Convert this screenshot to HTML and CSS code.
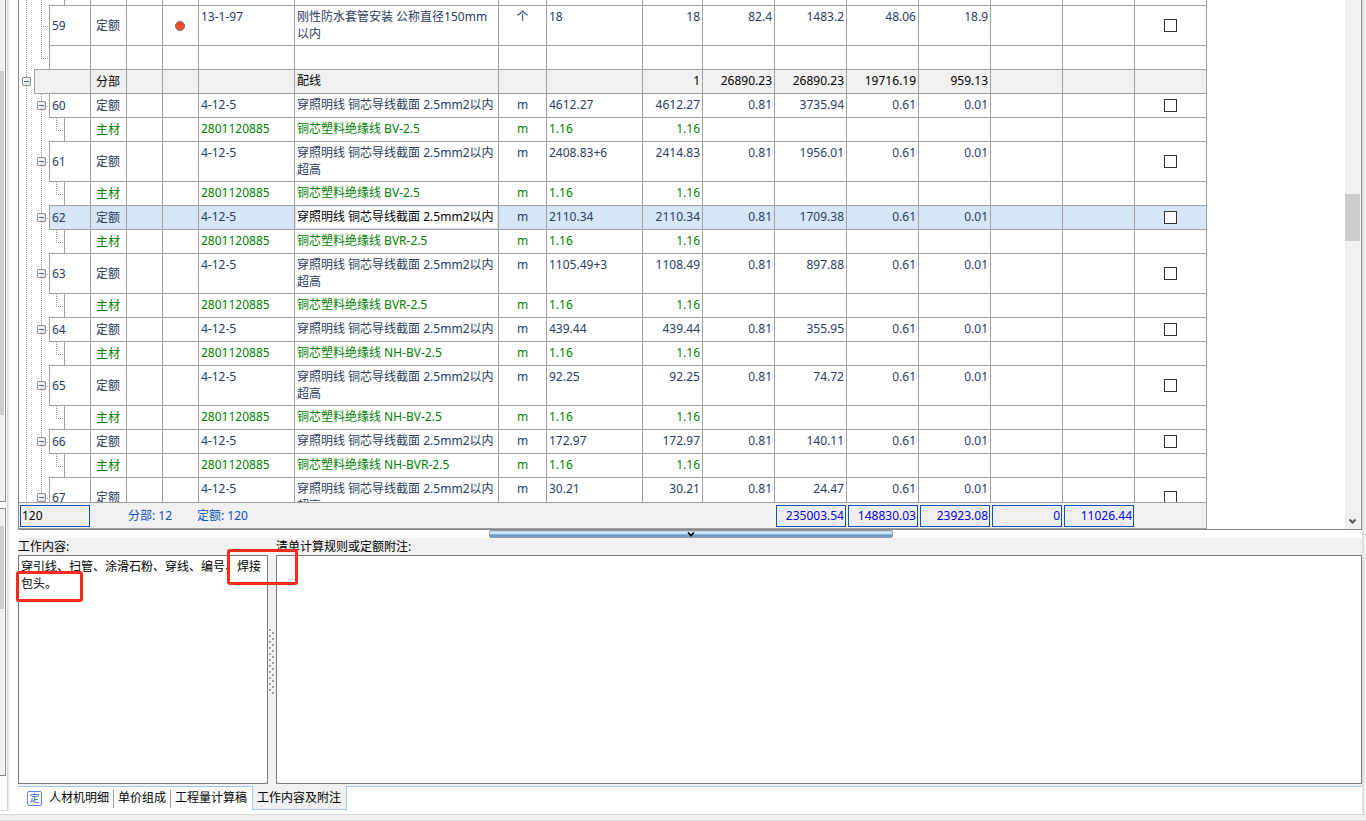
FILE: index.html
```html
<!DOCTYPE html>
<html lang="zh-CN">
<head>
<meta charset="utf-8">
<title>工作内容及附注</title>
<link rel="stylesheet" href="styles.css">
</head>
<body>
<div class="app">
  <aside class="side">
    <div class="side-pane side-top"><div class="side-thumb"></div></div>
    <div class="side-pane side-bottom"><div class="side-thumb"></div></div>
  </aside>
  <main class="main">
    <section class="grid-pane">
      <div class="grid-body">
        <div class="grid-rows">
          <table class="grid">
            <colgroup><col class="c-tree"><col class="c-s"><col class="c-s"><col class="c-s"><col class="c-code"><col class="c-name"><col class="c-unit"><col class="c-code"><col class="c-qty"><col class="c-num"><col class="c-num"><col class="c-num"><col class="c-num"><col class="c-num"><col class="c-num"><col class="c-num"></colgroup>
            <tbody>
              <tr class="cut"><td class="tree through"><div class="base"><div class="no leaf"></div></div></td><td></td><td></td><td></td><td></td><td></td><td></td><td></td><td></td><td></td><td></td><td></td><td></td><td></td><td></td><td></td></tr>
              <tr class="tall"><td class="tree item"><div class="base"><div class="no">59</div></div></td><td>定额</td><td></td><td><span class="dot"></span></td><td>13-1-97</td><td>刚性防水套管安装 公称直径150mm<br>以内</td><td>个</td><td>18</td><td>18</td><td>82.4</td><td>1483.2</td><td>48.06</td><td>18.9</td><td></td><td></td><td><input type="checkbox" aria-label="59"></td></tr>
              <tr><td class="tree last"><div class="base wide"><div class="no leaf"></div></div></td><td></td><td></td><td></td><td></td><td></td><td></td><td></td><td></td><td></td><td></td><td></td><td></td><td></td><td></td><td></td></tr>
              <tr class="part"><td class="tree top"><button class="toggle" aria-label="折叠"></button><div class="base wide"><div class="no"></div></div></td><td>分部</td><td></td><td></td><td></td><td>配线</td><td></td><td></td><td>1</td><td>26890.23</td><td>26890.23</td><td>19716.19</td><td>959.13</td><td></td><td></td><td></td></tr>
              <tr><td class="tree item"><button class="toggle" aria-label="折叠"></button><div class="base"><div class="no">60</div></div></td><td>定额</td><td></td><td></td><td>4-12-5</td><td>穿照明线 铜芯导线截面 2.5mm2以内</td><td>m</td><td>4612.27</td><td>4612.27</td><td>0.81</td><td>3735.94</td><td>0.61</td><td>0.01</td><td></td><td></td><td><input type="checkbox" aria-label="60"></td></tr>
              <tr class="mat"><td class="tree child"><div class="base"><div class="no leaf"></div></div></td><td>主材</td><td></td><td></td><td>2801120885</td><td>铜芯塑料绝缘线 BV-2.5</td><td>m</td><td>1.16</td><td>1.16</td><td></td><td></td><td></td><td></td><td></td><td></td><td></td></tr>
              <tr class="tall"><td class="tree item"><button class="toggle" aria-label="折叠"></button><div class="base"><div class="no">61</div></div></td><td>定额</td><td></td><td></td><td>4-12-5</td><td>穿照明线 铜芯导线截面 2.5mm2以内<br>超高</td><td>m</td><td>2408.83+6</td><td>2414.83</td><td>0.81</td><td>1956.01</td><td>0.61</td><td>0.01</td><td></td><td></td><td><input type="checkbox" aria-label="61"></td></tr>
              <tr class="mat"><td class="tree child"><div class="base"><div class="no leaf"></div></div></td><td>主材</td><td></td><td></td><td>2801120885</td><td>铜芯塑料绝缘线 BV-2.5</td><td>m</td><td>1.16</td><td>1.16</td><td></td><td></td><td></td><td></td><td></td><td></td><td></td></tr>
              <tr class="selected"><td class="tree item"><button class="toggle" aria-label="折叠"></button><div class="base"><div class="no">62</div></div></td><td>定额</td><td></td><td></td><td>4-12-5</td><td class="focus">穿照明线 铜芯导线截面 2.5mm2以内</td><td>m</td><td>2110.34</td><td>2110.34</td><td>0.81</td><td>1709.38</td><td>0.61</td><td>0.01</td><td></td><td></td><td><input type="checkbox" aria-label="62"></td></tr>
              <tr class="mat"><td class="tree child"><div class="base"><div class="no leaf"></div></div></td><td>主材</td><td></td><td></td><td>2801120885</td><td>铜芯塑料绝缘线 BVR-2.5</td><td>m</td><td>1.16</td><td>1.16</td><td></td><td></td><td></td><td></td><td></td><td></td><td></td></tr>
              <tr class="tall"><td class="tree item"><button class="toggle" aria-label="折叠"></button><div class="base"><div class="no">63</div></div></td><td>定额</td><td></td><td></td><td>4-12-5</td><td>穿照明线 铜芯导线截面 2.5mm2以内<br>超高</td><td>m</td><td>1105.49+3</td><td>1108.49</td><td>0.81</td><td>897.88</td><td>0.61</td><td>0.01</td><td></td><td></td><td><input type="checkbox" aria-label="63"></td></tr>
              <tr class="mat"><td class="tree child"><div class="base"><div class="no leaf"></div></div></td><td>主材</td><td></td><td></td><td>2801120885</td><td>铜芯塑料绝缘线 BVR-2.5</td><td>m</td><td>1.16</td><td>1.16</td><td></td><td></td><td></td><td></td><td></td><td></td><td></td></tr>
              <tr><td class="tree item"><button class="toggle" aria-label="折叠"></button><div class="base"><div class="no">64</div></div></td><td>定额</td><td></td><td></td><td>4-12-5</td><td>穿照明线 铜芯导线截面 2.5mm2以内</td><td>m</td><td>439.44</td><td>439.44</td><td>0.81</td><td>355.95</td><td>0.61</td><td>0.01</td><td></td><td></td><td><input type="checkbox" aria-label="64"></td></tr>
              <tr class="mat"><td class="tree child"><div class="base"><div class="no leaf"></div></div></td><td>主材</td><td></td><td></td><td>2801120885</td><td>铜芯塑料绝缘线 NH-BV-2.5</td><td>m</td><td>1.16</td><td>1.16</td><td></td><td></td><td></td><td></td><td></td><td></td><td></td></tr>
              <tr class="tall"><td class="tree item"><button class="toggle" aria-label="折叠"></button><div class="base"><div class="no">65</div></div></td><td>定额</td><td></td><td></td><td>4-12-5</td><td>穿照明线 铜芯导线截面 2.5mm2以内<br>超高</td><td>m</td><td>92.25</td><td>92.25</td><td>0.81</td><td>74.72</td><td>0.61</td><td>0.01</td><td></td><td></td><td><input type="checkbox" aria-label="65"></td></tr>
              <tr class="mat"><td class="tree child"><div class="base"><div class="no leaf"></div></div></td><td>主材</td><td></td><td></td><td>2801120885</td><td>铜芯塑料绝缘线 NH-BV-2.5</td><td>m</td><td>1.16</td><td>1.16</td><td></td><td></td><td></td><td></td><td></td><td></td><td></td></tr>
              <tr><td class="tree item"><button class="toggle" aria-label="折叠"></button><div class="base"><div class="no">66</div></div></td><td>定额</td><td></td><td></td><td>4-12-5</td><td>穿照明线 铜芯导线截面 2.5mm2以内</td><td>m</td><td>172.97</td><td>172.97</td><td>0.81</td><td>140.11</td><td>0.61</td><td>0.01</td><td></td><td></td><td><input type="checkbox" aria-label="66"></td></tr>
              <tr class="mat"><td class="tree child"><div class="base"><div class="no leaf"></div></div></td><td>主材</td><td></td><td></td><td>2801120885</td><td>铜芯塑料绝缘线 NH-BVR-2.5</td><td>m</td><td>1.16</td><td>1.16</td><td></td><td></td><td></td><td></td><td></td><td></td><td></td></tr>
              <tr class="tall"><td class="tree item"><button class="toggle" aria-label="折叠"></button><div class="base"><div class="no">67</div></div></td><td>定额</td><td></td><td></td><td>4-12-5</td><td>穿照明线 铜芯导线截面 2.5mm2以内<br>超高</td><td>m</td><td>30.21</td><td>30.21</td><td>0.81</td><td>24.47</td><td>0.61</td><td>0.01</td><td></td><td></td><td><input type="checkbox" aria-label="67"></td></tr>
            </tbody>
          </table>
        </div>
        <div class="summary">
          <span class="sum count">120</span>
          <span class="stat">分部: 12</span>
          <span class="stat grow">定额: 120</span>
          <span class="sum">235003.54</span>
          <span class="sum">148830.03</span>
          <span class="sum">23923.08</span>
          <span class="sum">0</span>
          <span class="sum">11026.44</span>
        </div>
      </div>
      <div class="scroll">
        <div class="scroll-thumb"></div>
        <button class="scroll-down" aria-label="向下滚动"><svg width="9" height="7" viewBox="0 0 9 7"><path d="M1.500 1.500 4.500 4.500 7.500 1.500" fill="none" stroke="#555" stroke-width="2"/></svg></button>
      </div>
    </section>
    <div class="splitter">
      <button class="splitter-bar" aria-label="收起"><svg width="8" height="5" viewBox="0 0 8 5"><path d="M1 .5 4 3.500 7 .5" fill="none" stroke="#000" stroke-width="1.600"/></svg></button>
    </div>
    <section class="notes">
      <div class="note work">
        <label for="work">工作内容:</label>
        <textarea id="work" spellcheck="false">穿引线、扫管、涂滑石粉、穿线、编号、焊接
包头。</textarea>
      </div>
      <div class="grip"><svg width="8" height="66" viewBox="0 0 8 66"><defs><pattern id="dots" width="8" height="6" patternUnits="userSpaceOnUse"><path d="M2 1h2v2H2zM5 4h2v2H5z" fill="#fff"/><path d="M1 0h2v2H1zM4 3h2v2H4z" fill="#a0a0a0"/></pattern></defs><rect width="8" height="66" fill="url(#dots)"/></svg></div>
      <div class="note rules">
        <label for="rules">清单计算规则或定额附注:</label>
        <textarea id="rules" spellcheck="false"></textarea>
      </div>
      <div class="mark mark-weld"></div>
      <div class="mark mark-wrap"></div>
    </section>
    <nav class="tabs">
      <span class="tab-icon">定</span>
      <button class="tab">人材机明细</button>
      <button class="tab">单价组成</button>
      <button class="tab">工程量计算稿</button>
      <button class="tab active">工作内容及附注</button>
    </nav>
  </main>
  <div class="edge"></div>
</div>
<footer class="status"></footer>
</body>
</html>
```

FILE: styles.css
```css
* { box-sizing: border-box; }

body {
  margin: 0;
  height: 100vh;
  display: flex;
  flex-direction: column;
  overflow: hidden;
  background: #fff;
  color: #000;
  font: 12px/17px "Noto Sans", "Noto Sans CJK SC", sans-serif;
}

button, input, textarea { font: inherit; color: inherit; margin: 0; padding: 0; }
button { border: 0; background: none; }
svg { display: block; }

.app { flex: 1; min-height: 0; display: flex; }

/* left docked panes */
.side {
  width: 10px;
  display: flex;
  flex-direction: column;
  gap: 6px;
  padding-bottom: 34px;
  margin-bottom: 3px;
  border-right: 2px solid #f0f0f0;
  border-bottom: 1px solid #d8d8d8;
  box-shadow: inset -1px 0 #d8d5dc;
}
.side-pane {
  width: 6px;
  background: #f0f0f0;
  border: solid #828790;
  border-width: 0 1px 1px 0;
  box-shadow: inset -1px 0 #fff;
}
.side-top { flex: 1; padding-top: 71px; }
.side-bottom { height: 268px; border-top-width: 1px; padding-top: 17px; }
.side-thumb { width: 4px; height: 344px; background: #cdcdcd; }
.side-bottom .side-thumb { height: 83px; }

.main { flex: 1; min-width: 0; margin-left: 8px; display: flex; flex-direction: column; }
.edge { width: 4px; background: #f0f0f0; border-left: 2px solid #e0e0e0; }

/* data grid */
.grid-pane {
  flex: 1;
  min-height: 0;
  display: flex;
  justify-content: space-between;
  border: 1px solid #828790;
  border-top: 0;
}
.grid-body { width: 1188px; display: flex; flex-direction: column; }
.grid-rows { flex: 1; min-height: 0; overflow: hidden; }
.grid { width: 1188px; table-layout: fixed; border-collapse: separate; border-spacing: 0; color: #2b3c5e; }
.c-tree, .c-num { width: 72px; }
.c-s { width: 36px; }
.c-code { width: 96px; }
.c-name { width: 204px; }
.c-unit { width: 48px; }
.c-qty { width: 60px; }

.grid td {
  height: 24px;
  padding: 2px 2px 0;
  vertical-align: top;
  text-align: right;
  white-space: nowrap;
  overflow: hidden;
  border: solid #a0a0a0;
  border-width: 0 1px 1px 0;
}
.grid .tall td { height: 40px; }
.grid .cut td { height: 6px; padding-top: 0; }
.grid td:nth-child(5), .grid td:nth-child(6), .grid td:nth-child(8) { text-align: left; }
.grid td:nth-child(7) { text-align: center; }
.grid td:nth-child(2), .grid td:nth-child(4), .grid td:nth-child(16) {
  padding: 0;
  text-align: center;
  vertical-align: middle;
}
.grid td:nth-child(2), .grid td:nth-child(4) { padding-right: 1px; }
.grid .mat { color: #008000; }
.grid .part { color: #000; }
.grid .part td, .grid .part .no { background-color: #f0f0f0; }
.grid .selected td, .grid .selected .no { background-color: #d6e5f8; }
.grid .selected .focus { background: #fff; color: #000; box-shadow: inset 0 0 0 1px #d6e5f8; }

/* outline guides */
.grid .tall .tree, .grid .tree {
  --v: repeating-linear-gradient(#999 0 1px, transparent 1px 2px);
  --h: repeating-linear-gradient(90deg, #999 0 1px, transparent 1px 2px);
  position: relative;
  padding: 0;
  text-align: left;
  border-bottom: 0;
}
.grid .through { background: var(--v) 7px 0 / 1px 100% no-repeat, var(--v) 22px 0 / 1px 100% no-repeat; }
.grid .item { background: var(--v) 7px 0 / 1px 100% no-repeat, var(--v) 22px 0 / 1px 100% no-repeat, var(--h) 22px 50% / 8px 1px no-repeat; }
.grid .last { background: var(--v) 7px 0 / 1px 100% no-repeat, var(--v) 22px 0 / 1px 50% no-repeat, var(--h) 22px 50% / 8px 1px no-repeat; }
.grid .child { background: var(--v) 7px 0 / 1px 100% no-repeat, var(--v) 22px 0 / 1px 100% no-repeat, var(--v) 37px 0 / 1px 50% no-repeat, var(--h) 37px 50% / 8px 1px no-repeat; }
.grid .part .top { background: #fff var(--v) 7px 0 / 1px 100% no-repeat; }
.grid .selected .item { background-color: #fff; }
.base { height: 100%; margin-left: 30px; border-bottom: 1px solid #a0a0a0; }
.base.wide { margin-left: 15px; }
.no { height: 100%; padding-left: 2px; display: flex; align-items: center; border-left: 1px solid #a0a0a0; }
.no.leaf { margin-left: 15px; }
.toggle {
  position: absolute;
  left: 18px;
  top: calc(50% - 5px);
  width: 9px;
  height: 9px;
  border: 1px solid #919191;
  border-radius: 1px;
  background: linear-gradient(#4b63a7, #4b63a7) center / 5px 1px no-repeat, linear-gradient(135deg, #fff, #dcdcdc);
}
.top .toggle { left: 3px; }

.dot { display: block; margin: 0 auto; width: 10px; height: 10px; border-radius: 50%; border: 1px solid #6b6670; background: #ff4b25; }
.grid input {
  appearance: none;
  display: block;
  width: 13px;
  height: 13px;
  margin: 0 auto;
  border: 1px solid #333;
  background: #fff;
}

/* totals */
.summary {
  height: 27px;
  display: flex;
  align-items: center;
  gap: 2px;
  padding: 0 72px 0 1px;
  background: #f0f0f0;
  border: solid #a0a0a0;
  border-width: 1px 1px 1px 0;
  color: #0b53c1;
}
.sum { width: 70px; height: 22px; padding: 0 1px; line-height: 20px; border: 1px solid #0b53c1; text-align: right; color: #0000f0; }
.count { text-align: left; color: #000; margin-right: 36px; }
.stat { width: 67px; }
.stat.grow { flex: 1; }

.scroll { width: 16px; border-right: 1px solid #fff; background: #f0f0f0; display: flex; flex-direction: column; justify-content: space-between; padding-top: 194px; }
.scroll-thumb { height: 47px; background: #cdcdcd; }
.scroll-down { height: 17px; padding: 6px 3px 4px; }

/* collapse bar */
.splitter { height: 8px; padding-left: 2px; display: flex; justify-content: center; }
.splitter-bar {
  width: 404px;
  height: 8px;
  display: flex;
  align-items: center;
  justify-content: center;
  border: 1px solid #999;
  border-radius: 2px;
  background: linear-gradient(#b4d8f1 0 1px, #cde8fa 1px 3px, #8db5df 3px 4px, #6c99cb 4px);
}

/* notes */
.notes { position: relative; height: 248px; display: flex; padding-bottom: 2px; background: #f0f0f0; }
.note { display: flex; flex-direction: column; }
.work { width: 250px; }
.rules { flex: 1; }
.note label { height: 17px; white-space: nowrap; }
.note textarea {
  flex: 1;
  padding: 2px;
  resize: none;
  outline: 0;
  overflow: hidden;
  border: 1px solid #7a7a7a;
  border-radius: 0;
  background: #fff;
}
.grip { width: 8px; display: flex; align-items: center; padding-top: 2px; }
.mark { position: absolute; border: 3px solid #ff2a1a; border-radius: 3px; pointer-events: none; }
.mark-weld { left: 209px; top: 11px; width: 71px; height: 36px; }
.mark-wrap { left: -2px; top: 33px; width: 67px; height: 31px; }

/* tabs */
.tabs { height: 28px; padding: 0 0 4px 9px; display: flex; align-items: stretch; background: linear-gradient(#a3c9f7, #a3c9f7) 0 0 / 100% 1px no-repeat; }
.tab-icon { width: 15px; height: 15px; margin: 5px 2px 0 0; border: 1px solid #5b86d6; border-radius: 2px; font-size: 10px; line-height: 12px; text-align: center; color: #2f62c4; }
.tab { padding: 0 5px 1px 4px; white-space: nowrap; }
.tab:nth-of-type(-n+2) { background: linear-gradient(#a0a0a0, #a0a0a0) 100% 60% / 1px 18px no-repeat; }
.tab:nth-of-type(1) { padding-left: 5px; }
.tab.active { background: #f0f0f0; border: 1px solid #a3c9f7; border-top: 0; }

.status { height: 7px; border: solid #d8d8d8; border-width: 1px 0; background: #f0f0f0; }
```
